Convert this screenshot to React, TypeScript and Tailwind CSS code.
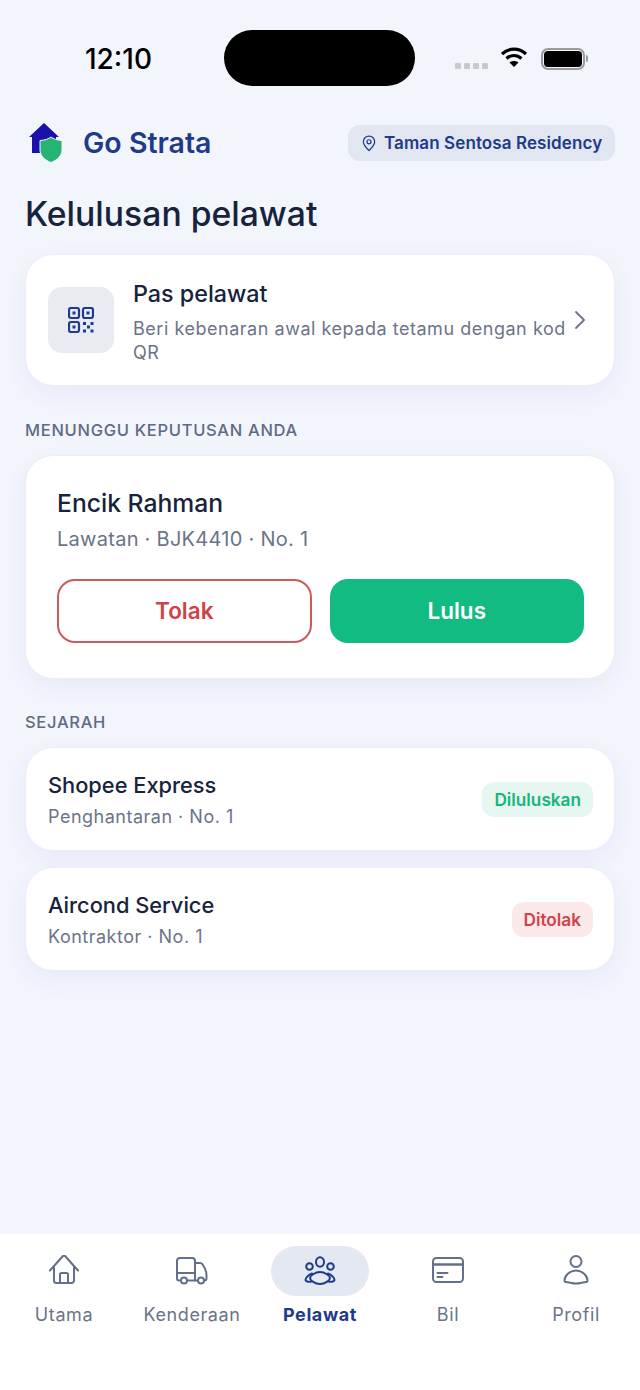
import React from 'react';

const navItems = [
  { label: 'Utama', icon: <HomeIcon /> },
  { label: 'Kenderaan', icon: <TruckIcon /> },
  { label: 'Pelawat', icon: <PeopleIcon />, active: true },
  { label: 'Bil', icon: <CardIcon /> },
  { label: 'Profil', icon: <UserIcon /> },
];

function HomeIcon() {
  return (
    <svg width="32" height="32" viewBox="0 0 32 32" fill="none" stroke="currentColor" strokeWidth="2" strokeLinecap="round" strokeLinejoin="round">
      <path d="M2 15.500 14.500 1.500a2 2 0 0 1 3 0L30 15.500" />
      <path d="M6 12.500v13a2.500 2.500 0 0 0 2.500 2.500h15a2.500 2.500 0 0 0 2.500-2.500v-13" />
      <path d="M12 28v-8.500a1.500 1.500 0 0 1 1.500-1.500h5a1.500 1.500 0 0 1 1.500 1.500V28" />
    </svg>
  );
}

function TruckIcon() {
  return (
    <svg width="32" height="32" viewBox="0 0 32 32" fill="none" stroke="currentColor" strokeWidth="2" strokeLinecap="round" strokeLinejoin="round">
      <path d="M5 25.500H3a2 2 0 0 1-2-2V6a3 3 0 0 1 3-3h12a3 3 0 0 1 3 3v19.500h-8" />
      <path d="M19 8h5c1 0 2 .5 2.700 1.500 2 3 3.800 7 3.800 11v3a2 2 0 0 1-2 2H28" />
      <path d="M19 25.500h3" />
      <path d="M1 18h18" />
      <circle cx="8" cy="25.500" r="3" />
      <circle cx="25" cy="25.500" r="3" />
    </svg>
  );
}

function PeopleIcon() {
  return (
    <svg width="32" height="32" viewBox="0 0 32 32" fill="none" stroke="currentColor" strokeWidth="2" strokeLinecap="round" strokeLinejoin="round">
      <ellipse cx="16" cy="7" rx="4" ry="4.800" />
      <circle cx="5.500" cy="11.500" r="3.300" />
      <circle cx="26.500" cy="11.500" r="3.300" />
      <path d="M16 17c-5 0-10 4-10 6 0 2.500 5 6 10 6s10-3.500 10-6c0-2-5-6-10-6Z" />
      <path d="M8 18.500c-3.500 1-6.500 4.500-6.500 6.500 0 1.500 2.500 2 6 1.500" />
      <path d="M24 18.500c3.500 1 6.500 4.500 6.500 6.500 0 1.500-2.500 2-6 1.500" />
    </svg>
  );
}

function CardIcon() {
  return (
    <svg width="32" height="32" viewBox="0 0 32 32" fill="none" stroke="currentColor" strokeWidth="2" strokeLinecap="round" strokeLinejoin="round">
      <rect x="1" y="3" width="30" height="24" rx="3.500" />
      <path d="M1 9.500h30" strokeWidth="2.400" />
      <path d="M5.500 18h10M5.500 22h5" />
    </svg>
  );
}

function UserIcon() {
  return (
    <svg width="32" height="32" viewBox="0 0 32 32" fill="none" stroke="currentColor" strokeWidth="2" strokeLinecap="round" strokeLinejoin="round">
      <circle cx="16" cy="6.500" r="5.500" />
      <path d="M16 15.500c-6.500 0-11.500 5.500-11.500 10 0 1 .5 1.500 1.500 1.500 3 0 6 1.500 10 1.500s7-1.500 10-1.500c1 0 1.500-.5 1.500-1.500 0-4.500-5-10-11.500-10Z" />
    </svg>
  );
}

function Logo() {
  return (
    <svg width="36" height="40" viewBox="0 0 36 40">
      <path d="M17 0 32 14H29V22H14V30H5V14H2Z" fill="#1a10ab" />
      <path d="M24 14c2.500 2 6 3.200 11 3.500v9.500c0 5.500-4.500 10-11 12.500-6.500-2.500-11-7-11-12.500v-9.500c5-.3 8.500-1.500 11-3.500Z" fill="#27b373" stroke="#f3f5fd" strokeWidth="1" />
    </svg>
  );
}

function Wifi() {
  return (
    <svg width="28" height="22" viewBox="0 0 28 22" fill="none" stroke="#000" strokeWidth="3.200">
      <path d="M2 8c7-6.500 17-6.500 24 0" />
      <path d="M6.500 12.500c4.500-4 10.500-4 15 0" />
      <path d="M14 21l-4.500-4.500c2.500-2 6.500-2 9 0Z" fill="#000" stroke="none" />
    </svg>
  );
}

function QrIcon() {
  return (
    <svg width="26" height="26" viewBox="0 0 26 26" fill="none" stroke="#1e3a8a" strokeWidth="2.200">
      <rect x="1" y="1" width="10" height="10" rx="2" />
      <rect x="15" y="1" width="10" height="10" rx="2" />
      <rect x="1" y="15" width="10" height="10" rx="2" />
      <g fill="#1e3a8a" stroke="none">
        <rect x="4.500" y="4.500" width="3" height="3" />
        <rect x="18.500" y="4.500" width="3" height="3" />
        <rect x="4.500" y="18.500" width="3" height="3" />
        <rect x="15" y="15" width="3" height="3" />
        <rect x="22.500" y="15" width="3" height="3" />
        <rect x="19" y="18.500" width="3" height="3" />
        <rect x="15" y="22.500" width="3" height="3" />
        <rect x="22.500" y="22.500" width="3" height="3" />
      </g>
    </svg>
  );
}

function HistoryRow({ name, sub, badge, tone }: { name: string; sub: string; badge: string; tone: 'green' | 'red' }) {
  return (
    <div className="flex h-[104px] items-center justify-between rounded-[28px] border border-[#eceef5] bg-white pl-[22px] pr-[21px] shadow-[0_8px_24px_rgba(30,58,138,0.06)]">
      <div className="pt-[3px]">
        <div className="text-[21.800px] leading-[30px] font-medium text-[#17233c]">{name}</div>
        <div className="mt-[3px] text-[18px] leading-[28px] tracking-[0.5px] text-[#6b7487]">{sub}</div>
      </div>
      <span
        className={`rounded-[12px] px-[12px] py-[6px] text-[17.200px] leading-[23px] font-semibold ${
          tone === 'green' ? 'bg-[#e5f7f0] text-[#16b481]' : 'bg-[#fbe9e9] text-[#cf4348]'
        }`}
      >
        {badge}
      </span>
    </div>
  );
}

export default function App() {
  return (
    <div className="flex h-[1390px] w-[640px] flex-col overflow-hidden bg-[#f3f5fd] font-['Inter',sans-serif]">
      {/* status bar */}
      <div className="flex h-[125px] shrink-0 items-start pt-[30px]">
        <div className="flex h-[57px] w-[224px] items-center justify-center pl-[13px] text-[28px] font-medium text-black">12:10</div>
        <div className="h-[56px] w-[191px] rounded-[28px] bg-black" />
        <div className="flex h-[57px] items-center pl-[40px]">
          <div className="mt-[14px] flex gap-[3px]">
            <span className="h-[6px] w-[6px] rounded-[1px] bg-[#c8c9cc]" />
            <span className="h-[6px] w-[6px] rounded-[1px] bg-[#c8c9cc]" />
            <span className="h-[6px] w-[6px] rounded-[1px] bg-[#c8c9cc]" />
            <span className="h-[6px] w-[6px] rounded-[1px] bg-[#c8c9cc]" />
          </div>
          <div className="mb-[3px] ml-[12px]"><Wifi /></div>
          <div className="ml-[13px] flex items-center">
            <div className="flex h-[22px] w-[44px] items-center justify-center rounded-[7px] border-2 border-[#9a9a9c]">
              <div className="h-[16px] w-[38px] rounded-[4px] bg-black" />
            </div>
            <div className="ml-[1px] h-[7px] w-[2px] rounded-r bg-[#9a9a9c]" />
          </div>
        </div>
      </div>

      <div className="flex flex-1 flex-col px-[25px]">
        {/* header */}
        <div className="flex h-[36px] items-center justify-between">
          <div className="flex items-center">
            <div className="ml-[2px]"><Logo /></div>
            <span className="mt-[1px] ml-[20px] text-[28.500px] font-semibold text-[#1e3a8a]">Go Strata</span>
          </div>
          <div className="flex h-[36px] w-[267px] items-center rounded-[12px] bg-[#e2e6f1] pl-[14px]">
            <svg width="14" height="17" viewBox="0 0 16 18" fill="none" stroke="#1e3a8a" strokeWidth="1.400">
              <path d="M8 17c-3-3-6.500-6-6.500-10a6.500 6.500 0 0 1 13 0c0 4-3.500 7-6.500 10Z" />
              <circle cx="8" cy="7" r="2.300" />
            </svg>
            <span className="mt-[1px] ml-[8px] text-[17px] font-semibold tracking-[0.1px] whitespace-nowrap text-[#1e3a8a]">Taman Sentosa Residency</span>
          </div>
        </div>

        <h1 className="mt-[31px] text-[33.700px] leading-[44px] font-medium text-[#17233c]">Kelulusan pelawat</h1>

        {/* visitor pass */}
        <div className="mt-[18px] flex h-[132px] items-center rounded-[28px] border border-[#eceef5] bg-white pr-[28px] pl-[22px] shadow-[0_8px_24px_rgba(30,58,138,0.06)]">
          <div className="flex h-[66px] w-[66px] shrink-0 items-center justify-center rounded-[14px] bg-[#e8ebf2]">
            <QrIcon />
          </div>
          <div className="ml-[19px] flex-1 pt-[3px]">
            <div className="text-[23.300px] leading-[32px] font-medium text-[#17233c]">Pas pelawat</div>
            <div className="mt-[7px] text-[18px] leading-[24px] tracking-[0.53px] text-[#6b7487]">Beri kebenaran awal kepada tetamu dengan kod QR</div>
          </div>
          <svg className="ml-[4px] shrink-0" width="12" height="20" viewBox="0 0 12 20" fill="none" stroke="#6b7487" strokeWidth="1.800" strokeLinecap="round" strokeLinejoin="round">
            <path d="M2 2l8 8-8 8" />
          </svg>
        </div>

        <div className="mt-[33px] text-[16.500px] leading-[22px] font-medium tracking-[0.7px] text-[#5f6b82]">MENUNGGU KEPUTUSAN ANDA</div>

        {/* pending */}
        <div className="mt-[14px] h-[224px] rounded-[28px] border border-[#eceef5] bg-white pt-[30px] pr-[30px] pl-[31px] shadow-[0_8px_24px_rgba(30,58,138,0.06)]">
          <div className="text-[24.700px] leading-[34px] font-medium text-[#17233c]">Encik Rahman</div>
          <div className="mt-[3px] text-[20px] leading-[32px] tracking-[0.27px] text-[#6b7487]">Lawatan · BJK4410 · No. 1</div>
          <div className="mt-[24px] flex gap-[18px]">
            <div className="flex h-[64px] flex-1 items-center justify-center rounded-[18px] border-2 border-[#cf5a5a] text-[22.500px] font-semibold text-[#cf4348]">Tolak</div>
            <div className="flex h-[64px] flex-1 items-center justify-center rounded-[18px] border-2 border-[#12bb82] bg-[#12bb82] text-[22.500px] font-semibold text-white">Lulus</div>
          </div>
        </div>

        <div className="mt-[32px] text-[16.500px] leading-[22px] font-medium tracking-[0.7px] text-[#5f6b82]">SEJARAH</div>

        <div className="mt-[14px] flex flex-col gap-[16px]">
          <HistoryRow name="Shopee Express" sub="Penghantaran · No. 1" badge="Diluluskan" tone="green" />
          <HistoryRow name="Aircond Service" sub="Kontraktor · No. 1" badge="Ditolak" tone="red" />
        </div>
      </div>

      {/* bottom nav */}
      <div className="flex h-[156px] shrink-0 bg-white pt-[12px]">
        {navItems.map((item) => (
          <div key={item.label} className="flex w-[128px] flex-col items-center">
            <div className={`flex h-[50px] w-[98px] items-center justify-center rounded-[25px] ${item.active ? 'bg-[#e4e8f2] text-[#1e3a8a]' : 'text-[#64708a]'}`}>
              {item.icon}
            </div>
            <span className={`mt-[6px] text-[18px] leading-[26px] tracking-[0.6px] ${item.active ? 'font-bold text-[#1e3a8a]' : 'text-[#6b7487]'}`}>
              {item.label}
            </span>
          </div>
        ))}
      </div>
    </div>
  );
}
